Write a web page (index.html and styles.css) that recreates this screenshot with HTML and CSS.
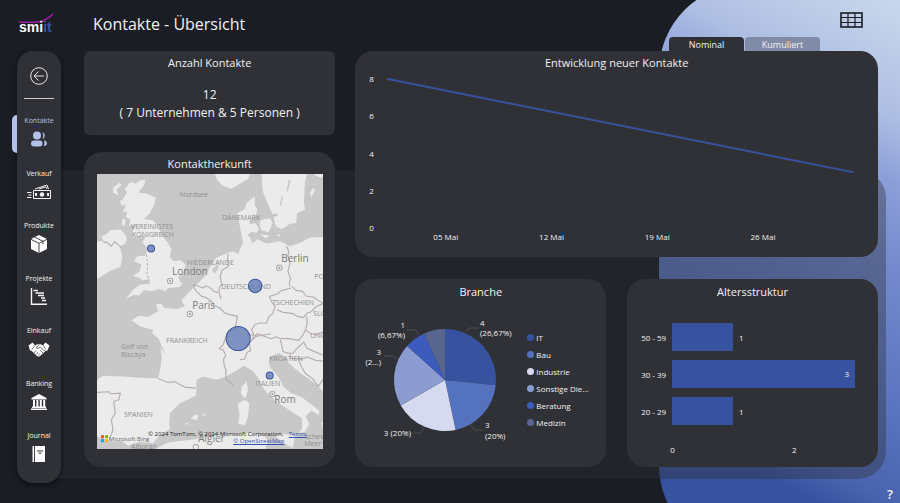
FILE: index.html
```html
<!DOCTYPE html>
<html lang="de">
<head>
<meta charset="utf-8">
<meta name="viewport" content="width=device-width, initial-scale=1">
<title>Kontakte - Übersicht</title>
<link rel="stylesheet" href="styles.css">
</head>
<body>
<div class="page">
  <div class="glow" aria-hidden="true"></div>

  <div class="rail">
    <a class="logo" href="#" aria-label="smiit">
      <svg class="logo-curve" width="36" height="12" viewBox="0 0 36 12" aria-hidden="true">
        <path d="M0 9C14 9.500 24 11 34 1" fill="none" stroke="#a21fa5" stroke-width="1.500"/>
      </svg>
      <span class="logo-word">smi<span class="logo-it">it</span></span>
    </a>

    <nav class="sidebar" aria-label="Hauptnavigation">
      <button class="back" type="button" aria-label="Zurück">
        <svg width="18" height="18" viewBox="0 0 18 18" fill="none" stroke="#e6e6e6" aria-hidden="true">
          <circle cx="9" cy="9" r="8.300"/><path d="M14 9H4.300M8.500 4.500L4 9l4.500 4.500"/>
        </svg>
      </button>
      <ul class="nav-list">
        <li><a class="nav-item nav-item-active" href="#"><span>Kontakte</span>
          <svg width="24" height="18" viewBox="0 0 24 18" fill="#b4c1e8" aria-hidden="true">
            <circle cx="10" cy="5.500" r="4"/><rect x="4" y="10.500" width="11.500" height="6" rx="3"/>
            <path d="M15.500 2.200a3.500 3.500 0 0 1 0 6.600q1.500-3.300 0-6.600zM16.800 10.500q3.200.3 3.200 2.800t-3.200 2.700q1.600-2.700 0-5.500z"/>
          </svg></a></li>
        <li><a class="nav-item" href="#"><span>Verkauf</span>
          <svg width="24" height="18" viewBox="0 0 24 18" fill="none" stroke="#f4f4f4" aria-hidden="true">
            <path d="M6.500 7.500h17v8h-17zM8 6l12-4 1.500 4M12 6l7-2.200 1 2.200M0 9.500h4.500M1.500 12h3M0 14.500h4.500"/>
            <path d="M9 10v3M21 10v3" stroke-width="2"/><circle cx="15" cy="11.500" r="2.200" fill="#f4f4f4" stroke="none"/>
          </svg></a></li>
        <li><a class="nav-item" href="#"><span>Produkte</span>
          <svg width="24" height="18" viewBox="0 0 24 18" fill="#fff" aria-hidden="true">
            <path d="M12 0l8 4v10l-8 4-8-4V4z"/>
            <path d="M4 4.300l8 4 8-4M12 8.300V18M8 2.300l8 4v3" fill="none" stroke="#303136" stroke-width=".9"/>
          </svg></a></li>
        <li><a class="nav-item" href="#"><span>Projekte</span>
          <svg width="24" height="18" viewBox="0 0 24 18" fill="none" stroke="#f4f4f4" stroke-width="1.400" aria-hidden="true">
            <path d="M4.500 0v16.300H20M6.500 2.500H11M8.500 5H17M11 7.500h6M14 10h4M15 12.500h4"/>
          </svg></a></li>
        <li><a class="nav-item" href="#"><span>Einkauf</span>
          <svg width="24" height="18" viewBox="0 0 24 18" fill="#fff" aria-hidden="true">
            <path d="M1.500 5.500L5.500 2.500 8 5.200l4-1.400 4 1.400 2.500-2.700 4 3-2 5-1.500.2-6 5.200q-1.500 1-3 0L4.500 10.700 3 10.500z"/>
            <path d="M8 5.200L5 9.500M12.500 4l-3.300 4q1.800 1.300 4-.8l5.500 4.500M16 5.200l3 4.300M7 13l2-2.500M9 14.500l2-2.500M11.300 15.500l1.500-2M13 10l3 3" fill="none" stroke="#303136" stroke-width=".7"/>
          </svg></a></li>
        <li><a class="nav-item" href="#"><span>Banking</span>
          <svg width="24" height="18" viewBox="0 0 24 18" fill="#fff" aria-hidden="true">
            <path d="M12 1l7.500 4v1.500h-15V5zM6 7h2v6.500H6zM9.400 7h2v6.500h-2zM12.800 7h2v6.500h-2zM16.200 7h2v6.500h-2zM5 13.500h14V15H5zM4 15.500h16V17H4z"/>
          </svg></a></li>
        <li><a class="nav-item" href="#"><span>Journal</span>
          <svg width="24" height="18" viewBox="0 0 24 18" fill="#fff" aria-hidden="true">
            <path d="M5.500 1h1.600v16H5.500zM8 1h10v16H8z"/>
            <path d="M10 6h6M11.500 8.200h3" stroke="#303136" fill="none"/>
          </svg></a></li>
      </ul>
    </nav>
  </div>

  <div class="content">
    <header class="topbar">
      <h1>Kontakte - Übersicht</h1>
      <button class="table-button" type="button" aria-label="Tabelle anzeigen">
        <svg width="23" height="16" viewBox="0 0 23 16" fill="none" stroke="#1a1d24" aria-hidden="true">
          <rect x="1" y="1" width="21" height="14" stroke-width="1.600"/>
          <path d="M1 5.500h21M1 10.500h21M8 1v14M15 1v14" stroke-width="1.200"/>
        </svg>
      </button>
      <div class="tabs">
        <button class="tab tab-active" type="button">Nominal</button>
        <button class="tab" type="button">Kumuliert</button>
      </div>
    </header>

    <main class="board">
      <div class="column">
        <section class="card card-count">
          <h2>Anzahl Kontakte</h2>
          <p>12<br>( 7 Unternehmen &amp; 5 Personen )</p>
        </section>

        <section class="card card-map">
          <h2>Kontaktherkunft</h2>
          <div class="map">
            <svg class="map-canvas" viewBox="0 0 226 275" preserveAspectRatio="xMidYMid slice" role="img" aria-label="Karte der Kontaktherkunft">
              <rect width="226" height="275" fill="#c8c8c8"/>
              <g transform="translate(-7.300 -24.300) scale(.3333)">
                <g fill="#ebebeb">
                  <path d="M122 98L138 102 152 92 166 91 163 108 145 130 170 132 198 145 194 165 180 192 162 208 188 212 208 232 214 255 235 280 245 300 240 322 252 335 272 332 287 345 282 368 265 382 270 395 278 402 270 412 235 415 228 424 205 418 190 425 162 422 150 437 132 436 108 447 130 420 150 405 180 402 180 388 160 392 148 384 130 378 150 365 155 345 133 335 142 320 168 318 172 295 158 278 168 262 156 258 130 264 127 250 140 222 118 230 122 210 108 202 112 186 98 188 108 170 98 150 112 130 105 118z"/>
                  <path d="M70 115l20-15 5 8-15 12 8 18-18-8zM92 150l10 5 3 15-12-5zM100 205l8 8-4 18-8-8z"/>
                  <path d="M22 276L42 274 34 262 55 250 60 242 92 240 106 254 112 268 104 284 90 290 98 320 92 352 60 365 22 388z"/>
                  <path d="M375 73h105l-5 15-27 16-23 14-28-10-15-18z"/>
                  <path d="M515 73h136l-6 27-3 55 3 25-24 12-2 28-20 3-24 16-18-10-7-30-18-40-14-35z"/>
                  <path d="M670 73h32l-5 12-15-4zM660 130l10-15 4 8-10 22zM620 165l6-25 5 2-8 28z"/>
                  <path d="M478 225l18-5 12 18-8 12-20-4zM510 212l30-6 8 14-12 28-22-6-4-15zM510 254l30 4-12 8zM560 258l8-4 3 7z"/>
                  <path d="M442 190L465 178 470 160 495 140 494 165 502 180 498 196 478 215 486 245 472 258 480 262 488 282 502 268 530 282 570 275 600 290 630 280 660 264 702 262V728L680 706 655 686 625 665 596 640 585 620 568 610 540 620 536 640 542 655 568 685 580 710 602 730 635 742 665 764 688 783 686 796 664 782 647 800 658 822 646 845 626 852 636 835 636 805 608 787 582 770 555 752 530 728 514 705 505 685 488 663 462 648 435 665 405 682 380 690 340 680 320 690 320 720 318 738 270 760 240 790 238 822 240 838 210 856 190 880 150 876 115 888 92 870 70 875 22 860V690L40 678 98 680 150 684 205 686 213 650 216 622 212 590 228 620 220 598 206 566 188 552 190 540 155 532 125 512 148 498 176 502 205 484 198 464 215 462 222 475 262 478 285 470 275 452 290 435 310 415 345 380 365 345 378 325 412 310 430 305 445 315 452 295 460 280z"/>
                  <path d="M455 710l10-8 5-8 4 28-8 24-13-15zM444 762l20-12 14 10-3 38-10 28-20-4 4-28zM555 858l25-5 35 3-6 38-25-12zM302 806l15-12 10 2-8 16zM335 792l12 2-3 6zM286 822l9-4-3 8zM190 900l45-22 80-10 65-12 50-2 50-5 40 6 15 18-10 27z"/>
                  <path d="M702 815l-8 5 4 14 4 2z"/>
                </g>
                <g fill="#c8c8c8">
                  <path d="M365 360l18-16 4 8-12 20zM545 195l15-5 4 8-16 5zM590 120l7-30 5 3-9 35zM570 165l5-25 4 2-6 30z"/>
                </g>
                <g fill="none" stroke="#b8aeae" stroke-width="3.500" stroke-linejoin="round">
                  <path d="M40 276l14 4 11 10 10-14 20 18M415 312l-2 18 3 20-20 12-5 20 5 22-8 10 0 16 6 18M310 403l14 6 16 6 8-6 12 4 12 12 13 3M310 405l8 18 17 17 14 4 16 11 8 12 17 8 9 9 6 6 12 4 26 6-8 40-14 3-6 2-8 20-7 20-12 12 12 4 8 16-7 12 2 18 5 12 0 28 22 20"/>
                  <path d="M590 290l6 14-2 16 6 20-6 25 8 22-4 14 2 10M604 415l-30 8-12 10-24 7 8 18 10 12-4 10-4 12-12 10-6 18-20 0-15 5-10 15 6 14-3 16-12 8-10 17M606 410l12 12 20 3 10 14 22 3 32 21M560 480l20 8 30 4 12 8 18 4 12-14 12-4 13-14 25-12M650 500l2 20-6 22-8 16-12 14-35-6-20 1-12-6-16 6-40-15-8 6-25-6M646 540l14 10 16 5 26-10M571 570l4 14 4 21 14 6 16-1 10-12 20-18M600 610l2 16 30 2 20-6 25 10 25 2M625 620l4 20 16 30 22 16 18 24 17-25M640 575l10 20 22 10 30 12M478 580l20-20 45-8M478 580l4 22-10 6-8 20-14 2M205 686l30 12 20-2 30 16 35 3M22 728l36-2 4 6 30-2-5 20-15 5 5 35-12 20 5 30-12 30"/>
                </g>
                <path d="M170 315l4 35-3 25 8 15" fill="none" stroke="#b6acac" stroke-width="3" stroke-dasharray="7 6"/>
                <g fill="#eee" stroke="#a9a9a9" stroke-width="3">
                  <circle cx="241" cy="394" r="8"/><circle cx="568" cy="354" r="8"/><circle cx="300" cy="493" r="8"/><circle cx="547" cy="733" r="8"/><circle cx="318" cy="892" r="8"/>
                </g>
                <g fill="#999"><circle cx="241" cy="394" r="3"/><circle cx="568" cy="354" r="3"/><circle cx="300" cy="493" r="3"/><circle cx="547" cy="733" r="3"/></g>
              </g>
              <g class="map-region">
                <text x="83" y="23">Nordsee</text>
                <text x="34" y="55">VEREINIGTES</text><text x="35" y="63">KÖNIGREICH</text>
                <text x="125" y="46">DÄNEMARK</text><text x="90" y="91">NIEDERLANDE</text>
                <text x="124" y="115">DEUTSCHLAND</text><text x="175" y="131">TSCHECHIEN</text>
                <text x="217" y="105">PO</text><text x="216" y="142">SLO</text><text x="213" y="164">UNG</text>
                <text x="69" y="169">FRANKREICH</text><text x="24" y="175">Golf von</text><text x="24" y="183">Biscaya</text>
                <text x="172" y="187">KROATIEN</text><text x="158" y="212">ITALIEN</text><text x="27" y="243">SPANIEN</text>
                <text x="34" y="275">Alborán</text><text x="208" y="265">sches</text><text x="207" y="272">Meer</text>
              </g>
              <g class="map-city">
                <text x="75" y="101">London</text><text x="184" y="88">Berlin</text><text x="95" y="135">Paris</text>
                <text x="177" y="229">Rom</text><text x="101" y="268">Algier</text>
              </g>
              <g fill="#5f78b5" fill-opacity=".78" stroke="#3a539d">
                <circle cx="54" cy="74.500" r="3.500"/><circle cx="158" cy="112" r="6.700"/><circle cx="141" cy="164.500" r="12"/><circle cx="172.500" cy="201.500" r="3.500"/>
              </g>
              <path fill="#f25022" d="M4 261h3v3H4z"/><path fill="#7fba00" d="M8 261h3v3H8z"/><path fill="#00a4ef" d="M4 265h3v3H4z"/><path fill="#ffb900" d="M8 265h3v3H8z"/>
              <text class="map-brand" x="12" y="267">Microsoft Bing</text>
            </svg>
            <p class="map-credit">© 2024 TomTom, © 2024 Microsoft Corporation, <a href="#">Terms</a><br><a class="osm" href="#">© OpenStreetMap</a></p>
          </div>
        </section>
      </div>

      <div class="column column-wide">
        <section class="card card-line">
          <h2>Entwicklung neuer Kontakte</h2>
          <div class="line-chart">
            <div class="y-axis"><span>8</span><span>6</span><span>4</span><span>2</span><span>0</span></div>
            <svg class="line-plot" viewBox="0 0 31 8" preserveAspectRatio="none" role="img" aria-label="Neue Kontakte: von 8 auf 3 fallend">
              <path d="M0 0L31 5" fill="none" stroke="#37539f" stroke-width="2" stroke-linecap="round" vector-effect="non-scaling-stroke"/>
            </svg>
            <div class="x-axis"><span>05 Mai</span><span>12 Mai</span><span>19 Mai</span><span>26 Mai</span></div>
          </div>
        </section>

        <div class="pair">
          <section class="card card-small">
            <h2>Branche</h2>
            <div class="pie-row">
              <svg class="pie" viewBox="0 0 160 140" role="img" aria-label="Kontakte nach Branche">
                <g transform="translate(84 70)">
                  <path fill="#37539f" d="M0 0V-51A51 51 0 0 1 50.700 5.300z"/>
                  <path fill="#5472bd" d="M0 0L50.700 5.300A51 51 0 0 1 10.600 49.900z"/>
                  <path fill="#d5daf0" d="M0 0L10.600 49.900A51 51 0 0 1-44.200 25.500z"/>
                  <path fill="#8c9bd0" d="M0 0L-44.200 25.500A51 51 0 0 1-37.900-34.100z"/>
                  <path fill="#3d5bbd" d="M0 0L-37.900-34.100A51 51 0 0 1-20.700-46.600z"/>
                  <path fill="#58668f" d="M0 0L-20.700-46.600A51 51 0 0 1 0-51z"/>
                  <g fill="none" stroke="#4b4c51"><path d="M21-48l3-4h9M26 45l3 5h9M-21 47l-3 6h-8M-26-45l-3-5h-9M-48-21l-4-3h-9"/></g>
                </g>
                <g class="pie-label">
                  <text x="119" y="16">4</text><text x="119" y="26">(26,67%)</text>
                  <text x="124" y="118">3</text><text x="124" y="129">(20%)</text>
                  <text x="50" y="126" text-anchor="end">3 (20%)</text>
                  <text x="44" y="18" text-anchor="end">1</text><text x="44" y="28" text-anchor="end">(6,67%)</text>
                  <text x="20" y="45" text-anchor="end">3</text><text x="20" y="55" text-anchor="end">(2...)</text>
                </g>
              </svg>
              <ul class="legend">
                <li class="c-it">IT</li><li class="c-bau">Bau</li><li class="c-industrie">Industrie</li>
                <li class="c-sonstige">Sonstige Die...</li><li class="c-beratung">Beratung</li><li class="c-medizin">Medizin</li>
              </ul>
            </div>
          </section>

          <section class="card card-small">
            <h2>Altersstruktur</h2>
            <div class="bars">
              <div class="bar-row"><span class="bar-name">50 - 59</span><div class="bar-track"><div class="bar" style="width:33.3%"></div><span>1</span></div></div>
              <div class="bar-row"><span class="bar-name">30 - 39</span><div class="bar-track"><div class="bar bar-full" style="width:100%">3</div></div></div>
              <div class="bar-row"><span class="bar-name">20 - 29</span><div class="bar-track"><div class="bar" style="width:33.3%"></div><span>1</span></div></div>
              <div class="bar-axis"><span>0</span><span>2</span></div>
            </div>
          </section>
        </div>
      </div>
    </main>
  </div>

  <a class="help" href="#" aria-label="Hilfe">?</a>
</div>
</body>
</html>
```
FILE: styles.css
```css
* { box-sizing: border-box; }

body {
  margin: 0;
  background: #1a1d24;
  color: #f2f2f2;
  font-family: "Open Sans", "Noto Sans", sans-serif;
  font-size: 8px;
}

h1, h2, p, ul { margin: 0; padding: 0; font-weight: 400; }
ul { list-style: none; }
button { border: 0; padding: 0; background: none; color: inherit; font: inherit; cursor: pointer; }
a { color: inherit; text-decoration: none; }
svg { display: block; }

.page {
  position: relative;
  display: grid;
  grid-template-columns: 44px 1fr;
  column-gap: 23px;
  min-height: 100vh;
  padding: 0 22px 20px 17px;
  overflow: hidden;
  isolation: isolate;
}

/* Blue shape behind the right-hand side */
.glow {
  position: absolute;
  z-index: -2;
  top: -16px;
  bottom: -50px;
  right: -80px;
  width: 321px;
  border-radius: 88px;
  background: linear-gradient(208deg, #c9d8ec 8%, #aebee3 24%, #8c9fd9 33%, #7389cc 45%, #5d76c0 62%, #4a64b0 76%, #37539f 82%);
}

.rail { display: grid; grid-template-rows: 51px 1fr; }

.logo { padding: 13px 0 0 2px; }
.logo-word {
  display: block;
  margin-top: -6px;
  font: bold 14px/16px "Liberation Sans", Arial, sans-serif;
  color: #fff;
}
.logo-it { color: #37539f; }

.sidebar {
  display: flex;
  flex-direction: column;
  align-items: center;
  padding: 16px 0 0;
  border-radius: 16px;
  background: #303136;
  box-shadow: 0 2px 5px #0008;
}
.back { padding-bottom: 13px; border-bottom: 1px solid #ccc; width: 30px; display: flex; justify-content: center; }
.nav-list { flex: 1; width: 100%; padding-top: 16px; display: grid; grid-auto-rows: 1fr; }
.nav-item {
  position: relative;
  display: flex;
  flex-direction: column;
  align-items: center;
  gap: 3px;
  font-size: 7px;
  line-height: 12px;
}
.nav-item-active { color: #b4c1e8; }
.nav-item-active::before {
  content: "";
  position: absolute;
  left: -5px;
  top: 0;
  width: 5px;
  height: 38px;
  border-radius: 5px 0 0 5px;
  background: #b4c1e8;
}

.content { display: grid; grid-template-rows: 51px 1fr; min-width: 0; }

.topbar {
  display: grid;
  grid-template: 37px 14px / 1fr auto;
  align-items: center;
}
h1 { padding: 11px 0 0 9px; font-size: 16px; line-height: 26px; }
.table-button { margin: 2px 15px 0 0; }
.tabs { grid-column: 1 / -1; justify-self: end; display: flex; gap: 1px; margin-right: 58px; }
.tab {
  width: 75px;
  height: 14px;
  border-radius: 4px 4px 0 0;
  background: #808ba7;
  font-size: 9px;
  line-height: 16px;
}
.tab-active { background: #303136; }

.board {
  position: relative;
  display: grid;
  grid-template-columns: 251fr 522fr;
  column-gap: 20px;
  padding-bottom: 16px;
}
.board::before {
  content: "";
  position: absolute;
  z-index: -1;
  inset: 119px -8px 4px -50px;
  border-radius: 0 28px 28px 0;
  background: #2e313864;
}

.column { display: grid; grid-template-rows: 84px 1fr; row-gap: 17px; }
.column-wide { grid-template-rows: 206fr 188fr; row-gap: 22px; }
.pair { display: grid; grid-template-columns: 1fr 1fr; column-gap: 21px; }

.card {
  display: flex;
  flex-direction: column;
  min-width: 0;
  border-radius: 18px;
  background: #303136;
}
.card h2 { padding-top: 3px; font-size: 11px; line-height: 18px; text-align: center; }
.card-count { border-radius: 6px; }
.card-count p { padding-top: 14px; font-size: 12px; line-height: 18px; text-align: center; }

.map { position: relative; flex: 1; margin: 1px 12px 18px 13px; }
.map-canvas { position: absolute; width: 100%; height: 100%; }
.map-region { fill: #8d8d8d; font-size: 7px; }
.map-city { fill: #7b7b7b; font-size: 10px; }
.map-brand { fill: #686868; font-size: 6px; }
.map-credit {
  position: absolute;
  right: 17px;
  bottom: 4px;
  color: #222;
  font-size: 6px;
  line-height: 7px;
  text-align: right;
  white-space: nowrap;
}
.map-credit a { margin-left: 4px; color: #3454b4; text-decoration: underline; }
.map-credit .osm { margin-right: 22px; }

.line-chart {
  flex: 1;
  display: grid;
  grid-template: 1fr 18px / 10px 1fr;
  column-gap: 9px;
  padding: 7px 25px 11px 14px;
}
.y-axis { display: flex; flex-direction: column; justify-content: space-between; line-height: 12px; margin: -6px 0; }
.line-plot { width: 100%; height: 100%; overflow: visible; }
.x-axis {
  grid-column: 2;
  display: grid;
  grid-template-columns: repeat(4, 1fr);
  padding: 2px 8% 0 1%;
  text-align: center;
  line-height: 14px;
}

.card-small h2 { padding-top: 4px; }
.pie-row { display: flex; padding: 9px 16px 0 6px; gap: 6px; }
.pie { width: 160px; height: 140px; flex: none; }
.pie-label { fill: #f2f2f2; font-size: 8px; }
.legend { padding-top: 19px; line-height: 17px; white-space: nowrap; }
.legend li { display: flex; align-items: center; gap: 2px; }
.legend li::before { content: ""; width: 7px; height: 7px; border-radius: 50%; background: var(--dot); }
.c-it { --dot: #37539f; }
.c-bau { --dot: #5472bd; }
.c-industrie { --dot: #d5daf0; }
.c-sonstige { --dot: #8c9bd0; }
.c-beratung { --dot: #3d5bbd; }
.c-medizin { --dot: #58668f; }

.bars { display: grid; row-gap: 9px; padding: 22px 23px 0 7px; }
.bar-row { display: grid; grid-template-columns: 32px 1fr; column-gap: 6px; align-items: center; }
.bar-name { text-align: right; white-space: nowrap; }
.bar-track { display: flex; align-items: center; gap: 6px; }
.bar { height: 28px; background: #37539f; }
.bar-full { padding-right: 6px; line-height: 28px; text-align: right; }
.bar-axis { display: grid; grid-template-columns: 2fr 1fr; padding: 9px 2px 0 36px; line-height: 14px; }

.help { position: absolute; right: 7px; bottom: 0; font-size: 13px; font-weight: 600; line-height: 18px; }
```
